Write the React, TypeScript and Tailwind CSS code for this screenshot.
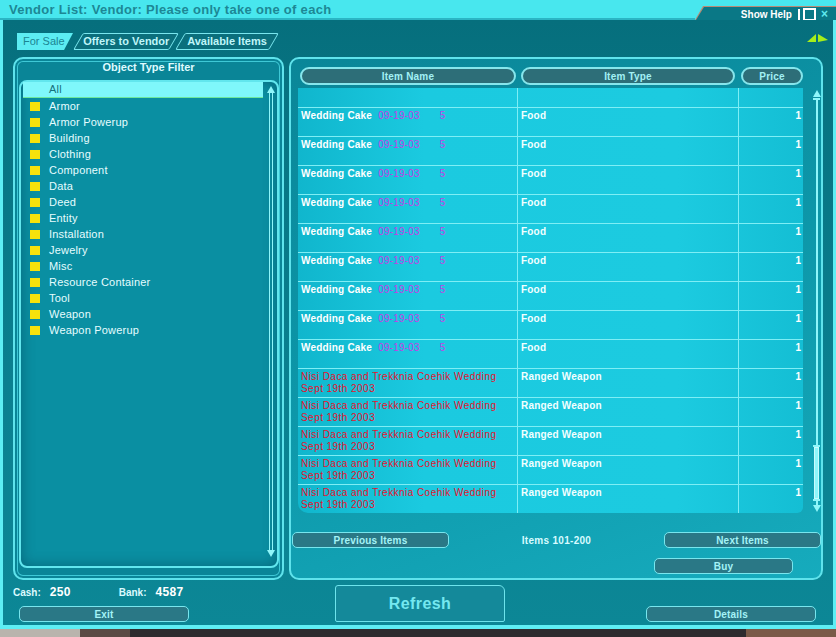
import React from 'react';

const FONT = "font-['Liberation_Sans',Arial,sans-serif]";

const filters = [
  'Armor',
  'Armor Powerup',
  'Building',
  'Clothing',
  'Component',
  'Data',
  'Deed',
  'Entity',
  'Installation',
  'Jewelry',
  'Misc',
  'Resource Container',
  'Tool',
  'Weapon',
  'Weapon Powerup',
];

const rows: ('cake' | 'nisi')[] = [
  ...Array(9).fill('cake'),
  ...Array(5).fill('nisi'),
];

const UpArrow = () => (
  <div className="w-0 h-0 border-x-[4px] border-x-transparent border-b-[7px] border-b-[#8ff6fa]" />
);
const DownArrow = () => (
  <div className="w-0 h-0 border-x-[4px] border-x-transparent border-t-[7px] border-t-[#8ff6fa]" />
);

const ColHeader = ({ label, w }: { label: string; w: string }) => (
  <div
    className={`${w} h-[18px] rounded-full bg-[#2d6e78] border-2 border-[#86e6ec] flex items-center justify-center text-[10px] font-bold text-[#a3f1f5] tracking-[0.2px]`}
  >
    {label}
  </div>
);

const FlatButton = ({ label, className }: { label: string; className: string }) => (
  <div
    className={`h-[16px] rounded-[5px] bg-[#2a7886] border border-[#78e6ee] flex items-center justify-center text-[10px] font-bold text-[#a4f3f7] tracking-[0.2px] ${className}`}
  >
    {label}
  </div>
);

export default function App() {
  return (
    <div className={`w-[836px] h-[637px] overflow-hidden flex flex-col bg-[#2b2a2a] ${FONT}`}>
      {/* Title bar */}
      <div className="h-[20px] flex shrink-0">
        <div className="flex-1 bg-[#48e7ee] border-b-2 border-[#2bb6c4] pl-[9px] flex items-center">
          <span className="text-[13px] font-bold text-[#1d8795] tracking-[0.3px] leading-none">
            Vendor List: Vendor: Please only take one of each
          </span>
        </div>
        <div className="w-[141px] bg-[#48e7ee] relative">
          <div className="absolute inset-x-0 top-[6px] bottom-0 bg-[#b98a74] [clip-path:polygon(8px_0,100%_0,100%_100%,0_100%)]" />
          <div className="absolute inset-x-0 top-[7px] bottom-0 bg-[#0a7886] [clip-path:polygon(9px_0,100%_0,100%_100%,1px_100%)] flex items-center justify-end pr-[8px] gap-[3px]">
            <span className="text-[10px] font-bold text-white mr-[3px] mt-[2px]">Show Help</span>
            <div className="w-[2px] h-[12px] bg-white mt-[2px]" />
            <div className="w-[13px] h-[13px] border-2 border-white mt-[2px]" />
            <span className="text-[12px] font-bold text-[#5fe8ee] ml-[2px] mt-[1px]">×</span>
          </div>
        </div>
      </div>

      {/* Body */}
      <div className="h-[609px] shrink-0 border-x-[3px] border-b-[4px] border-[#5eeef4] bg-[linear-gradient(180deg,#066f7d,#0a8090_60%,#0c8796)] px-[10px] pt-[13px] flex flex-col">
        {/* Tabs */}
        <div className="h-[17px] flex items-center pl-[4px]">
          <div className="h-[17px] w-[56px] bg-[#5cecf2] [clip-path:polygon(0_0,100%_0,84%_100%,0_100%)] flex items-center pl-[6px] text-[11px] text-[#1b8592]">
            For Sale
          </div>
          <div className="ml-[5px] h-[17px] w-[96px] -skew-x-[30deg] border border-[#7ae6ee] rounded-[2px] bg-[#0b6f7c] flex items-center justify-center">
            <span className="skew-x-[30deg] text-[11px] font-bold text-[#bff6f9]">Offers to Vendor</span>
          </div>
          <div className="ml-[6px] h-[17px] w-[94px] -skew-x-[30deg] border border-[#7ae6ee] rounded-[2px] bg-[#0b6f7c] flex items-center justify-center">
            <span className="skew-x-[30deg] text-[11px] font-bold text-[#bff6f9]">Available Items</span>
          </div>
          <div className="flex-1" />
          <svg width="22" height="8" viewBox="0 0 22 8" className="mr-[-6px] mt-[-7px]">
            <polygon points="0,8 9,0 9,8" fill="#a6ee1a" />
            <polygon points="11,0 21,6 11,8" fill="#a6ee1a" />
          </svg>
        </div>

        {/* Panels */}
        <div className="mt-[7px] h-[523px] flex gap-[5px]">
          {/* Left filter panel */}
          <div className="w-[271px] rounded-[10px] border-2 border-[#5fe3ec] bg-[#0a8597] shadow-[inset_0_0_0_2px_#0a8597,inset_0_0_0_3px_#3fc8d6] flex flex-col">
            <div className="pt-[1px] leading-[14px] text-center text-[11px] font-bold text-[#dffbff]">
              Object Type Filter
            </div>
            <div className="mt-[6px] ml-[4px] mr-[3px] h-[488px] rounded-[8px] border-2 border-[#62e6ee] bg-[#0a8fa2] shadow-[inset_0_0_14px_rgba(0,55,75,0.45)] flex pl-[2px]">
              <div className="w-[240px] flex flex-col">
                <div className="h-[16px] bg-[#7ff7fb] border-b border-[#6ce89c] pl-[26px] flex items-center text-[11px] text-[#17707c] tracking-[0.2px]">
                  All
                </div>
                {filters.map(f => (
                  <div key={f} className="h-[16px] flex items-center">
                    <div className="ml-[7px] w-[10px] h-[9px] bg-[#f6e20c]" />
                    <span className="ml-[9px] text-[11px] text-[#e6fdff] tracking-[0.2px]">{f}</span>
                  </div>
                ))}
              </div>
              <div className="ml-[3px] w-[10px] flex flex-col items-center pt-[4px] pb-[9px]">
                <UpArrow />
                <div className="flex-1 w-[4px] border-x border-[#8ff6fa]" />
                <DownArrow />
              </div>
            </div>
          </div>

          {/* Right items panel */}
          <div className="w-[534px] rounded-[10px] border-2 border-[#5fe3ec] bg-[linear-gradient(160deg,#0a8698,#0d97a9_50%,#16abbd)] flex flex-col">
            <div className="mt-[8px] ml-[9px] flex">
              <ColHeader label="Item Name" w="w-[216px]" />
              <div className="w-[5px]" />
              <ColHeader label="Item Type" w="w-[214px]" />
              <div className="w-[6px]" />
              <ColHeader label="Price" w="w-[62px]" />
            </div>

            <div className="mt-[3px] ml-[7px] flex">
              <div className="w-[505px] h-[425px] rounded-bl-[10px] rounded-br-[6px] overflow-hidden bg-[linear-gradient(90deg,#10b6cd,#1bcae0_25%,#1ccbe0_75%,#14bed4)]">
                <div className="h-[19px] flex">
                  <div className="w-[219px]" />
                  <div className="w-[221px] border-l border-[#7eeef5]" />
                  <div className="flex-1 border-l border-[#7eeef5]" />
                </div>
                {rows.map((r, i) => (
                  <div key={i} className="h-[29px] flex border-t border-[#7eeef5]">
                    <div className="w-[219px] pl-[3px] pt-[2px] text-[10px] leading-[12px] tracking-[0.2px]">
                      {r === 'cake' ? (
                        <div className="flex">
                          <span className="font-bold text-white">Wedding Cake</span>
                          <span className="ml-[6px] text-[#c23fe6]">09-19-03</span>
                          <span className="ml-[20px] text-[#c23fe6]">5</span>
                        </div>
                      ) : (
                        <div className="text-[#e4122e] tracking-[0.45px]">
                          Nisi Daca and Trekknia Coehik Wedding
                          <br />
                          Sept 19th 2003
                        </div>
                      )}
                    </div>
                    <div className="w-[221px] border-l border-[#7eeef5] pl-[3px] pt-[2px] text-[10px] leading-[12px] font-bold text-[#f2ffff] tracking-[0.2px]">
                      {r === 'cake' ? 'Food' : 'Ranged Weapon'}
                    </div>
                    <div className="flex-1 border-l border-[#7eeef5] pr-[2px] pt-[2px] text-right text-[10px] leading-[12px] font-bold text-white">
                      1
                    </div>
                  </div>
                ))}
              </div>
              <div className="ml-[9px] w-[9px] flex flex-col items-center pt-[2px] pb-[1px]">
                <UpArrow />
                <div className="w-[7px] h-[2px] bg-[#8ff6fa] mt-[1px]" />
                <div className="flex-1 w-[2px] bg-[#8ff6fa]" />
                <div className="w-[7px] h-[2px] bg-[#8ff6fa]" />
                <div className="w-[5px] h-[52px] bg-[#8ff6fa] border border-[#c8fcfe]" />
                <div className="w-[7px] h-[2px] bg-[#8ff6fa]" />
                <div className="w-[2px] h-[4px] bg-[#8ff6fa]" />
                <DownArrow />
              </div>
            </div>

            <div className="mt-[19px] ml-[1px] flex items-center">
              <FlatButton label="Previous Items" className="w-[157px]" />
              <div className="flex-1 text-center text-[10px] font-bold text-[#d8fbff] tracking-[0.3px]">
                Items 101-200
              </div>
              <FlatButton label="Next Items" className="w-[157px]" />
            </div>
            <div className="mt-[10px] ml-[363px]">
              <FlatButton label="Buy" className="w-[139px]" />
            </div>
          </div>
        </div>

        {/* Bottom bar */}
        <div className="flex">
          <div className="w-[176px] flex flex-col">
            <div className="mt-[5px] h-[14px] flex items-center text-[#dcfaff] font-bold">
              <span className="text-[10px]">Cash:</span>
              <span className="ml-[9px] text-[12px] text-white tracking-[0.3px]">250</span>
              <span className="ml-[48px] text-[10px]">Bank:</span>
              <span className="ml-[9px] text-[12px] text-white tracking-[0.3px]">4587</span>
            </div>
            <FlatButton label="Exit" className="mt-[7px] ml-[6px] w-[170px]" />
          </div>
          <div className="ml-[146px] mt-[5px] w-[170px] h-[37px] rounded-tr-[6px] rounded-tl-[3px] rounded-b-[2px] border border-[#6ee4ec] bg-[#14899a] flex items-center justify-center text-[16px] font-bold text-[#74e8f0] tracking-[0.4px]">
            Refresh
          </div>
          <FlatButton label="Details" className="ml-[141px] mt-[26px] w-[170px]" />
        </div>
      </div>

      {/* Strip below window */}
      <div className="flex-1 flex">
        <div className="w-[80px] bg-[#b9b4ad]" />
        <div className="w-[50px] bg-[#5a4a44]" />
        <div className="flex-1 bg-[#2d2c2f]" />
        <div className="w-[90px] bg-[#7a5a48]" />
      </div>
    </div>
  );
}
